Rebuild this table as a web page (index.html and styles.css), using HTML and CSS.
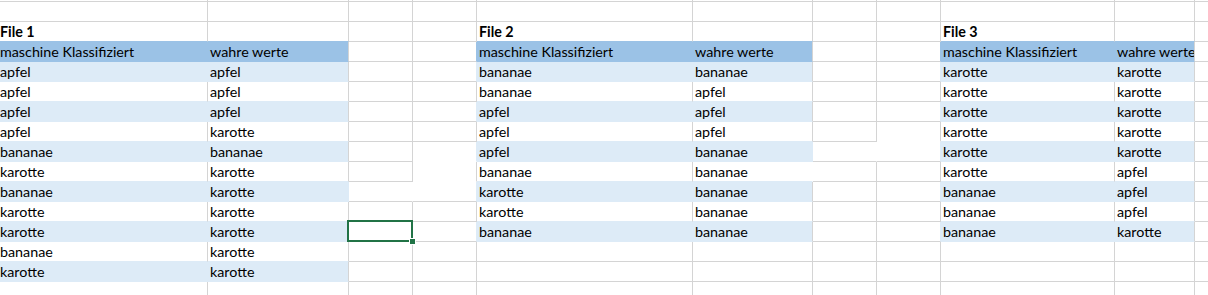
FILE: index.html
```html
<!DOCTYPE html>
<html lang="de">
<head>
<meta charset="utf-8">
<title>Tabelle</title>
<link rel="stylesheet" href="styles.css">
</head>
<body>
<div class="sheet">
  <div class="row top">
    <div class="c ca"></div><div class="c cb"></div><div class="c cc"></div><div class="c cd"></div><div class="c ce"></div><div class="c cf"></div><div class="c cg"></div><div class="c ch"></div><div class="c ci"></div><div class="c cj"></div><div class="c ck"></div>
  </div>
  <div class="row">
    <div class="c ca"></div><div class="c cb"></div><div class="c cc"></div><div class="c cd"></div><div class="c ce"></div><div class="c cf"></div><div class="c cg"></div><div class="c ch"></div><div class="c ci"></div><div class="c cj"></div><div class="c ck"></div>
  </div>
  <div class="row">
    <div class="c ca ti title">File 1</div><div class="c cb ti"></div><div class="c cc"></div><div class="c cd"></div><div class="c ce ti title">File 2</div><div class="c cf ti"></div><div class="c cg"></div><div class="c ch"></div><div class="c ci ti title">File 3</div><div class="c cj ti"></div><div class="c ck"></div>
  </div>
  <div class="row">
    <div class="c ca hd">maschine Klassifiziert</div><div class="c cb hd edge">wahre werte</div><div class="c cc"></div><div class="c cd lh"></div><div class="c ce hd">maschine Klassifiziert</div><div class="c cf hd edge">wahre werte</div><div class="c cg"></div><div class="c ch lh"></div><div class="c ci hd">maschine Klassifiziert</div><div class="c cj hd edge">wahre werte</div><div class="c ck"></div>
  </div>
  <div class="row">
    <div class="c ca bd">apfel</div><div class="c cb bd edge">apfel</div><div class="c cc"></div><div class="c cd lb"></div><div class="c ce bd">bananae</div><div class="c cf bd edge">bananae</div><div class="c cg"></div><div class="c ch lb"></div><div class="c ci bd">karotte</div><div class="c cj bd edge">karotte</div><div class="c ck"></div>
  </div>
  <div class="row">
    <div class="c ca wt">apfel</div><div class="c cb wt">apfel</div><div class="c cc"></div><div class="c cd"></div><div class="c ce wt">bananae</div><div class="c cf wt">apfel</div><div class="c cg"></div><div class="c ch"></div><div class="c ci wt">karotte</div><div class="c cj wt">karotte</div><div class="c ck"></div>
  </div>
  <div class="row">
    <div class="c ca bd">apfel</div><div class="c cb bd edge">apfel</div><div class="c cc"></div><div class="c cd lb"></div><div class="c ce bd">apfel</div><div class="c cf bd edge">apfel</div><div class="c cg"></div><div class="c ch lb"></div><div class="c ci bd">karotte</div><div class="c cj bd edge">karotte</div><div class="c ck"></div>
  </div>
  <div class="row">
    <div class="c ca wt">apfel</div><div class="c cb wt">karotte</div><div class="c cc"></div><div class="c cd"></div><div class="c ce wt">apfel</div><div class="c cf wt">apfel</div><div class="c cg"></div><div class="c ch nb"></div><div class="c ci wt">karotte</div><div class="c cj wt">karotte</div><div class="c ck"></div>
  </div>
  <div class="row">
    <div class="c ca bd">bananae</div><div class="c cb bd edge">bananae</div><div class="c cc"></div><div class="c cd lb nb"></div><div class="c ce bd">apfel</div><div class="c cf bd nr">bananae</div><div class="c cg nr"></div><div class="c ch lb"></div><div class="c ci bd">karotte</div><div class="c cj bd edge">karotte</div><div class="c ck"></div>
  </div>
  <div class="row">
    <div class="c ca wt">karotte</div><div class="c cb wt">karotte</div><div class="c cc"></div><div class="c cd nb"></div><div class="c ce wt">bananae</div><div class="c cf wt nr">bananae</div><div class="c cg"></div><div class="c ch"></div><div class="c ci wt">karotte</div><div class="c cj wt">apfel</div><div class="c ck"></div>
  </div>
  <div class="row">
    <div class="c ca bd">bananae</div><div class="c cb bd nr">karotte</div><div class="c cc nr"></div><div class="c cd lb"></div><div class="c ce bd">karotte</div><div class="c cf bd edge">bananae</div><div class="c cg"></div><div class="c ch lb"></div><div class="c ci bd">bananae</div><div class="c cj bd edge">apfel</div><div class="c ck"></div>
  </div>
  <div class="row">
    <div class="c ca wt">karotte</div><div class="c cb wt">karotte</div><div class="c cc"></div><div class="c cd"></div><div class="c ce wt">karotte</div><div class="c cf wt">bananae</div><div class="c cg"></div><div class="c ch"></div><div class="c ci wt">bananae</div><div class="c cj wt">apfel</div><div class="c ck"></div>
  </div>
  <div class="row">
    <div class="c ca bd">karotte</div><div class="c cb bd edge">karotte</div><div class="c cc"></div><div class="c cd lb"></div><div class="c ce bd">bananae</div><div class="c cf bd edge">bananae</div><div class="c cg"></div><div class="c ch lb"></div><div class="c ci bd">bananae</div><div class="c cj bd edge">karotte</div><div class="c ck"></div>
  </div>
  <div class="row">
    <div class="c ca wt">bananae</div><div class="c cb wt">karotte</div><div class="c cc"></div><div class="c cd"></div><div class="c ce"></div><div class="c cf"></div><div class="c cg"></div><div class="c ch"></div><div class="c ci"></div><div class="c cj"></div><div class="c ck"></div>
  </div>
  <div class="row">
    <div class="c ca bd">karotte</div><div class="c cb bd edge">karotte</div><div class="c cc"></div><div class="c cd"></div><div class="c ce"></div><div class="c cf"></div><div class="c cg"></div><div class="c ch"></div><div class="c ci"></div><div class="c cj"></div><div class="c ck"></div>
  </div>
  <div class="row">
    <div class="c ca"></div><div class="c cb"></div><div class="c cc"></div><div class="c cd"></div><div class="c ce"></div><div class="c cf"></div><div class="c cg"></div><div class="c ch"></div><div class="c ci"></div><div class="c cj"></div><div class="c ck"></div>
  </div>
  <div class="sel"></div>
</div>
</body>
</html>
```

FILE: styles.css
```css
html, body {
  margin: 0;
  padding: 0;
  background: #ffffff;
  overflow: hidden;
}

.sheet {
  position: relative;
  width: 1259px;
  font-family: "Lato", "Liberation Sans", sans-serif;
  font-size: 14.3px;
  color: #000000;
}

.row {
  display: flex;
  height: 20px;
}

.row.top {
  height: 2px;
}

.c {
  box-sizing: border-box;
  flex: none;
  height: 100%;
  padding-left: 2px;
  line-height: 19px;
  white-space: nowrap;
  overflow: hidden;
  border-right: 1px solid #d4d4d4;
  border-bottom: 1px solid #d4d4d4;
}

.ca { width: 208px; padding-left: 0; }
.cb { width: 141px; }
.cc { width: 64px; }
.cd { width: 64px; }
.ce { width: 216px; }
.cf { width: 120px; }
.cg { width: 64px; }
.ch { width: 64px; }
.ci { width: 174px; }
.cj { width: 80px; }
.ck { width: 64px; }

.title {
  font-weight: 700;
}

/* row above the header: its bottom line is covered by the header fill */
.ti { border-bottom-color: #9bc2e6; }

/* header fill */
.hd {
  background: #9bc2e6;
  border-bottom-color: #9bc2e6;
  border-right-color: #9bc2e6;
}

/* banded row fill */
.bd {
  background: #ddebf7;
  border-bottom-color: #ddebf7;
  border-right-color: #ddebf7;
}

/* right edge of a filled table keeps its gridline */
.hd.edge,
.bd.edge { border-right-color: #d4d4d4; }

/* unfilled table row: bottom line hidden by the band below */
.wt { border-bottom-color: #ddebf7; }

/* cell left of a filled cell: right line covered */
.lh { border-right-color: #9bc2e6; }
.lb { border-right-color: #ddebf7; }

/* gridline segments that are not painted */
.c.nr { border-right-color: transparent; }
.c.nb { border-bottom-color: transparent; }

/* active cell */
.sel {
  position: absolute;
  left: 347px;
  top: 220px;
  width: 66px;
  height: 22px;
  box-sizing: border-box;
  border: 2px solid #217346;
}

.sel::after {
  content: "";
  position: absolute;
  right: -4px;
  bottom: -4px;
  width: 5px;
  height: 5px;
  background: #217346;
  box-shadow: 0 0 0 1px #ffffff;
}
```
